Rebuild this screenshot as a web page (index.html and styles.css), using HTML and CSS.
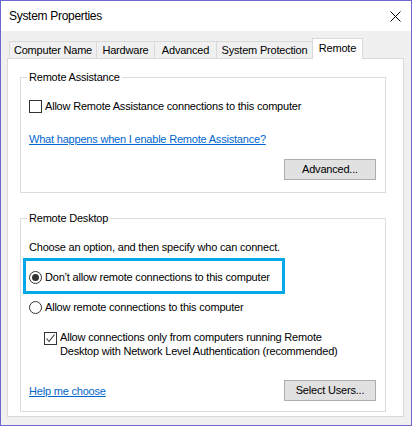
FILE: index.html
```html
<!DOCTYPE html>
<html>
<head>
<meta charset="utf-8">
<link rel="stylesheet" href="styles.css">
</head>
<body>
<div class="window">
  <div class="titlebar">
    <span class="title">System Properties</span>
    <svg class="close" width="11" height="11" viewBox="0 0 11 11"><path d="M0.5 0.5 L10.5 10.5 M10.5 0.5 L0.5 10.5" stroke="#000" stroke-width="1" fill="none"/></svg>
  </div>
  <div class="content">
    <div class="tabs">
      <div class="tab t-name">Computer Name</div>
      <div class="tab t-hw">Hardware</div>
      <div class="tab t-adv">Advanced</div>
      <div class="tab t-sp">System Protection</div>
      <div class="tab active t-rem">Remote</div>
    </div>
    <div class="panel">
      <fieldset class="group g-assist">
        <legend>Remote Assistance</legend>
        <div class="row r-assist"><span class="check"></span><span>Allow Remote Assistance connections to this computer</span></div>
        <div class="link l-what">What happens when I enable Remote Assistance?</div>
        <div class="btnrow"><div class="btn">Advanced...</div></div>
      </fieldset>
      <fieldset class="group g-desk">
        <legend>Remote Desktop</legend>
        <div class="text r-choose">Choose an option, and then specify who can connect.</div>
        <div class="highlight">
          <div class="row"><span class="radio on"></span><span>Don’t allow remote connections to this computer</span></div>
        </div>
        <div class="row r-allow"><span class="radio"></span><span>Allow remote connections to this computer</span></div>
        <div class="row r-nla"><span class="check checked"><svg width="11" height="11" viewBox="0 0 11 11"><path d="M1.5 5.5 L4 8.5 L9.5 1.5" stroke="#333" stroke-width="1.1" fill="none"/></svg></span><span>Allow connections only from computers running Remote<br>Desktop with Network Level Authentication (recommended)</span></div>
        <div class="bottomrow">
          <span class="link">Help me choose</span>
          <div class="btn">Select Users...</div>
        </div>
      </fieldset>
    </div>
  </div>
</div>
</body>
</html>
```
FILE: styles.css
```css
* { box-sizing: border-box; }
html, body { margin: 0; padding: 0; background: #f0f0f0; }
body {
  font-family: "Liberation Sans", Arial, sans-serif;
  font-size: 11px;
  letter-spacing: -0.2px;
  line-height: 14px;
  color: #000;
}
.window {
  width: 412px;
  height: 426px;
  border: 1px solid #6f68cc;
  background: #f0f0f0;
  display: flex;
  flex-direction: column;
}
.titlebar {
  height: 30px;
  background: #fff;
  display: flex;
  align-items: center;
  justify-content: space-between;
  padding: 0 10px 0 8px;
}
.title { font-size: 12px; letter-spacing: -0.3px; }
.close { display: block; }
.content {
  flex: 1;
  display: flex;
  flex-direction: column;
  padding: 7px 7px 8px 6px;
}
.tabs {
  display: flex;
  align-items: flex-end;
  height: 20px;
  margin-left: 2px;
  position: relative;
  z-index: 1;
}
.tab {
  height: 17px;
  border: 1px solid #d9d9d9;
  border-bottom: none;
  background: #f0f0f0;
  margin-right: -1px;
  text-align: center;
  line-height: 16px;
  white-space: nowrap;
}
.t-name { width: 88px; }
.t-hw { width: 59px; }
.t-adv { width: 63px; }
.t-sp { width: 97px; }
.t-rem { width: 51px; }
.tab.active {
  height: 21px;
  background: #fff;
  margin-bottom: -1px;
  line-height: 18px;
}
.panel {
  flex: 1;
  background: #fff;
  border: 1px solid #d9d9d9;
  padding: 11px 17px 0 12px;
}
.group {
  margin: 0;
  border: 1px solid #dcdcdc;
  min-inline-size: 0;
}
.group legend {
  padding: 0 2px;
  margin-left: -2px;
  line-height: 14px;
}
.g-assist { padding: 0 9px 12px 8px; }
.g-desk { padding: 0 9px 10px 8px; margin-top: 18px; }
.row {
  display: flex;
  align-items: center;
  height: 14px;
  white-space: nowrap;
}
.r-assist { margin-top: 15px; }
.check {
  width: 13px;
  height: 13px;
  border: 1px solid #333;
  background: #fff;
  margin-right: 3px;
  flex: none;
  display: flex;
  align-items: center;
  justify-content: center;
}
.check svg { display: block; }
.radio {
  width: 13px;
  height: 13px;
  border: 1px solid #333;
  border-radius: 50%;
  background: #fff;
  margin-right: 3px;
  flex: none;
  display: flex;
  align-items: center;
  justify-content: center;
}
.radio.on::after {
  content: "";
  width: 7px;
  height: 7px;
  border-radius: 50%;
  background: #333;
}
.link {
  color: #0066cc;
  text-decoration: underline;
  white-space: nowrap;
}
.l-what { margin-top: 19px; }
.btnrow {
  display: flex;
  justify-content: flex-end;
  margin-top: 13px;
}
.btn {
  width: 92px;
  height: 21px;
  background: #e1e1e1;
  border: 1px solid #adadad;
  text-align: center;
  line-height: 19px;
}
.r-choose { margin-top: 15px; }
.highlight {
  margin-top: 4px;
  margin-left: -6px;
  width: 262px;
  border: 3px solid #00a8e6;
  padding: 9px 0 7px 3px;
}
.r-allow { margin-top: 6px; }
.r-nla {
  margin-top: 16px;
  margin-left: 15px;
  height: auto;
  align-items: flex-start;
}
.r-nla .check { margin-top: 2px; margin-right: 3px; }
.bottomrow {
  margin-top: 22px;
  display: flex;
  justify-content: space-between;
  align-items: center;
}
```
